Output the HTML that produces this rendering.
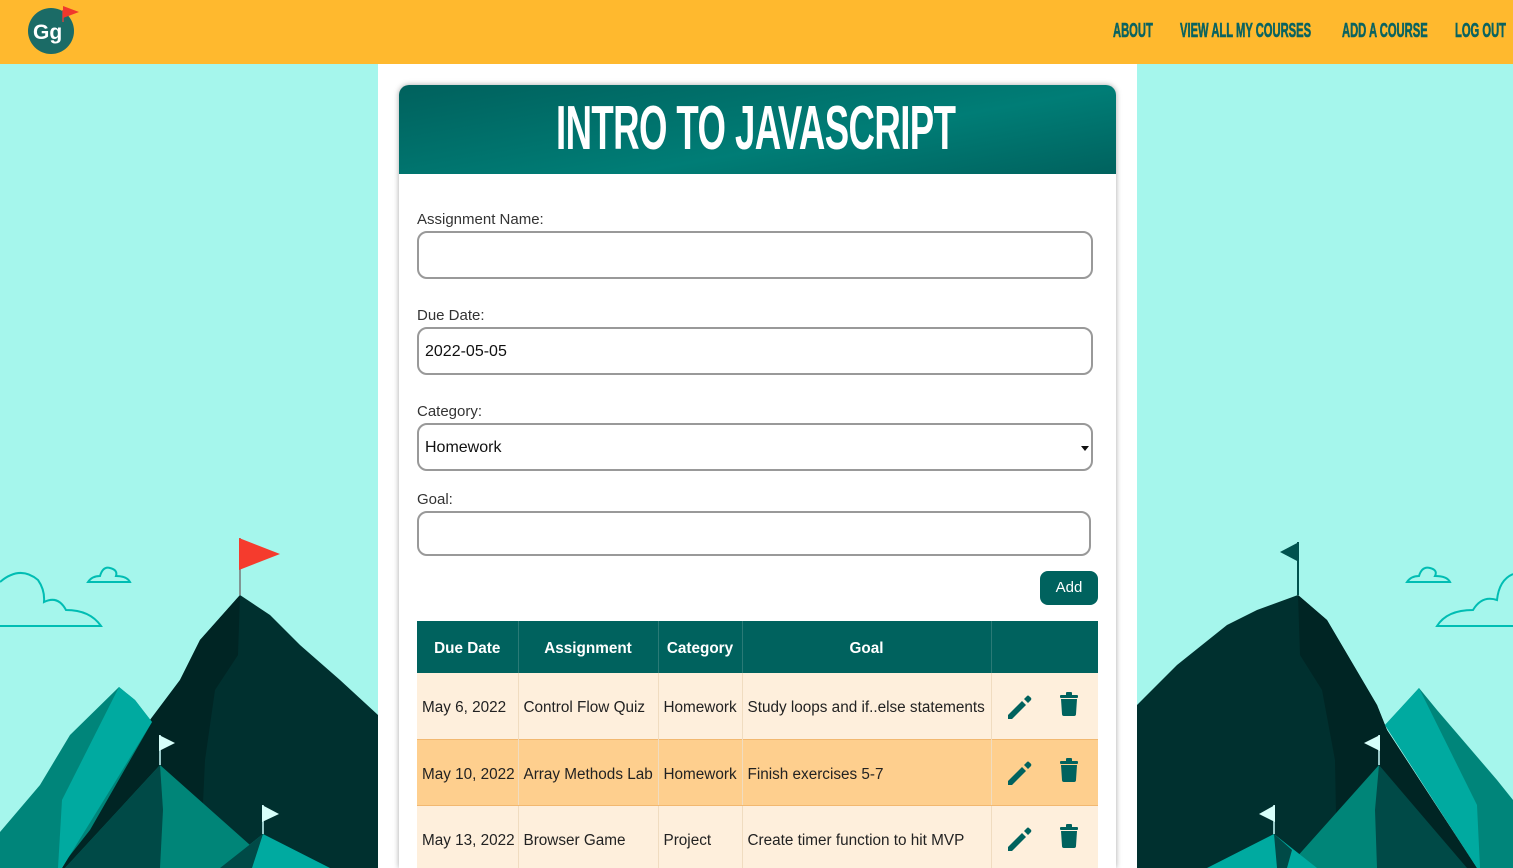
<!DOCTYPE html>
<html><head><style>
*{margin:0;padding:0;box-sizing:border-box}
html,body{width:1513px;height:868px;overflow:hidden}
body{background:#a5f6ec;font-family:"Liberation Sans",sans-serif;position:relative}
.top{position:absolute;left:0;top:0;width:1513px;height:64px;background:#ffb92e}
.nav{position:absolute;top:20px;font-family:"Liberation Sans Narrow","Liberation Sans",sans-serif;font-weight:bold;font-size:20px;color:#0a6360;transform:scaleX(.56);transform-origin:left;white-space:nowrap;-webkit-text-stroke:0.6px #0a6360}
.col{position:absolute;left:378px;top:64px;width:759px;height:804px;background:#fff}
.card{position:absolute;left:399px;top:85px;width:717px;height:783px;background:#fff;border-radius:10px 10px 0 0;box-shadow:0 0 6px rgba(0,0,0,.35)}
.ch{height:89px;border-radius:10px 10px 0 0;background:linear-gradient(170deg,#00615d,#007d76 60%,#00625e);position:relative}
.title{position:absolute;left:157px;top:8px;font-family:"Liberation Sans Narrow","Liberation Sans",sans-serif;font-weight:bold;font-size:62px;color:#fff;transform:scaleX(.59);transform-origin:left;white-space:nowrap;letter-spacing:-1px}
.lbl{position:absolute;left:417px;font-size:15px;color:#333}
.inp{position:absolute;left:417px;width:676px;height:48px;border:2px solid #999;border-radius:10px;font-size:16px;color:#111;padding:14px 0 0 6px}
.btn{position:absolute;left:1040px;top:571px;width:58px;height:34px;background:#00625e;color:#fff;border-radius:8px;font-size:15px;text-align:center;line-height:34px}
table{position:absolute;left:417px;top:621px;width:681px;border-collapse:collapse;font-size:15.3px}
th{background:#00625e;color:#fff;height:52px;font-weight:bold;border-left:1px solid #2a7a76;padding-top:3px}
td{height:66px;padding-left:5px;padding-top:5px;color:#222;border-left:1px solid #f0dcc0;white-space:nowrap}
tr.a td{background:#feefdc}
tr.b td{background:#fecf8e;border-top:1px solid #f2b870;border-bottom:1px solid #f2b870}
</style></head><body>
<div class="top">
<svg width="90" height="64" style="position:absolute;left:0;top:0"><circle cx="51" cy="31" r="23" fill="#1b6b66"/><line x1="63" y1="10" x2="63" y2="22" stroke="#c44" stroke-width="1.5"/><polygon points="63,6 79,12 63,18" fill="#f0382c"/><text x="33" y="39" font-family="Liberation Sans" font-weight="bold" font-size="21" fill="#fff">Gg</text></svg>
<div class="nav" style="left:1113px">ABOUT</div>
<div class="nav" style="left:1180px">VIEW ALL MY COURSES</div>
<div class="nav" style="left:1342px">ADD A COURSE</div>
<div class="nav" style="left:1455px">LOG OUT</div>
</div>
<svg width="378" height="338" style="position:absolute;left:0;top:530px" viewBox="0 0 378 338">
<g fill="none" stroke="#00bdb3" stroke-width="2"><path d="M0,52 Q20,35 38,50 Q45,60 44,72 Q58,65 66,80 Q90,80 101,96 L0,96"/><path d="M88,52 Q92,46 100,46 Q103,36 110,38 Q118,40 116,46 Q127,46 130,52 Z"/></g>
<polygon points="62,338 150,190 180,150 200,110 240,65 270,85 300,115 340,150 378,185 378,338" fill="#00302f"/>
<polygon points="62,338 150,190 180,150 200,110 240,65 238,125 215,160 205,230 200,338" fill="#002524"/>
<polygon points="0,302 40,255 70,205 119,157 135,170 152,192 90,300 60,338 0,338" fill="#00857a"/>
<polygon points="119,157 135,170 152,192 62,338 58,338 62,270" fill="#00aaa0"/>
<polygon points="65,338 160,235 250,315 230,338" fill="#008578"/>
<polygon points="65,338 160,235 163,280 160,338" fill="#004a47"/>
<polygon points="220,338 263,304 330,338" fill="#00aaa0"/>
<polygon points="220,338 263,304 252,338" fill="#004a47"/>
<line x1="240" y1="8" x2="240" y2="65" stroke="#777" stroke-width="1.5"/><polygon points="239,8 280,24 239,40" fill="#f53b2d"/>
<line x1="160" y1="205" x2="160" y2="235" stroke="#cff" stroke-width="1.5"/><polygon points="159,205 175,213 159,221" fill="#d7fffa"/>
<line x1="263" y1="275" x2="263" y2="304" stroke="#cff" stroke-width="1.5"/><polygon points="262,275 279,284 262,292" fill="#d7fffa"/>
</svg>
<svg width="376" height="338" style="position:absolute;left:1137px;top:530px" viewBox="0 0 376 338">
<g fill="none" stroke="#00bdb3" stroke-width="2"><path d="M376,44 Q362,50 360,70 Q345,65 336,80 Q310,80 300,96 L376,96"/><path d="M270,52 Q274,46 282,46 Q285,36 293,38 Q301,40 298,46 Q310,46 313,52 Z"/></g>
<polygon points="0,175 40,135 90,95 120,80 161,65 190,90 240,175 250,200 340,338 0,338" fill="#00302f"/>
<polygon points="161,65 190,90 240,175 250,200 340,338 200,338 198,230 185,160 163,125" fill="#002524"/>
<polygon points="248,195 282,158 300,180 330,215 360,250 376,270 376,338 340,338" fill="#00857a"/>
<polygon points="248,195 282,158 340,275 343,338 340,338" fill="#00aaa0"/>
<polygon points="150,338 242,235 330,338" fill="#004a47"/>
<polygon points="150,338 242,235 238,280 240,338" fill="#008578"/>
<polygon points="70,338 137,304 180,338" fill="#00aaa0"/>
<polygon points="137,304 155,320 150,338 140,338" fill="#004a47"/>
<line x1="161" y1="12" x2="161" y2="65" stroke="#00524e" stroke-width="2"/><polygon points="162,12 143,22 162,32" fill="#00524e"/>
<line x1="242" y1="205" x2="242" y2="235" stroke="#cff" stroke-width="1.5"/><polygon points="243,205 227,213 243,221" fill="#d7fffa"/>
<line x1="137" y1="275" x2="137" y2="304" stroke="#cff" stroke-width="1.5"/><polygon points="138,275 122,284 138,292" fill="#d7fffa"/>
</svg>
<div class="col"></div>
<div class="card"><div class="ch"><div class="title">INTRO TO JAVASCRIPT</div></div></div>
<div class="lbl" style="top:211px">Assignment Name:</div>
<div class="inp" style="top:231px"></div>
<div class="lbl" style="top:307px">Due Date:</div>
<div class="inp" style="top:327px">2022-05-05</div>
<div class="lbl" style="top:403px">Category:</div>
<div class="inp" style="top:423px">Homework<span style="position:absolute;right:2px;top:21px;border:4px solid transparent;border-top:5px solid #111"></span></div>
<div class="lbl" style="top:491px">Goal:</div>
<div class="inp" style="top:511px;height:45px;width:674px"></div>
<div class="btn">Add</div>
<table>
<tr><th style="width:101px;border-left:none">Due Date</th><th style="width:140px">Assignment</th><th style="width:84px">Category</th><th style="width:249px">Goal</th><th></th></tr>
<tr class="a"><td style="border-left:none">May 6, 2022</td><td>Control Flow Quiz</td><td>Homework</td><td>Study loops and if..else statements</td><td class="ic"></td></tr>
<tr class="b"><td style="border-left:none">May 10, 2022</td><td>Array Methods Lab</td><td>Homework</td><td>Finish exercises 5-7</td><td class="ic"></td></tr>
<tr class="a"><td style="border-left:none">May 13, 2022</td><td>Browser Game</td><td>Project</td><td>Create timer function to hit MVP</td><td class="ic"></td></tr>
</table>
<svg width="100" height="200" style="position:absolute;left:1000px;top:690px">
<g fill="#00625e">
<g transform="translate(8,3)"><path d="M0,22 L0,26 L4,26 L18,12 L14,8 Z M16,6 L20,10 L23,7 Q24,5 22,4 L21,3 Q20,2 19,3 Z"/></g>
<g transform="translate(60,2)"><rect x="0" y="3" width="18" height="3" rx="1"/><rect x="6" y="0" width="6" height="4" rx="1"/><path d="M1,7 L17,7 L16,22 Q16,24 14,24 L4,24 Q2,24 2,22 Z"/></g>
<g transform="translate(8,69)"><path d="M0,22 L0,26 L4,26 L18,12 L14,8 Z M16,6 L20,10 L23,7 Q24,5 22,4 L21,3 Q20,2 19,3 Z"/></g>
<g transform="translate(60,68)"><rect x="0" y="3" width="18" height="3" rx="1"/><rect x="6" y="0" width="6" height="4" rx="1"/><path d="M1,7 L17,7 L16,22 Q16,24 14,24 L4,24 Q2,24 2,22 Z"/></g>
<g transform="translate(8,135)"><path d="M0,22 L0,26 L4,26 L18,12 L14,8 Z M16,6 L20,10 L23,7 Q24,5 22,4 L21,3 Q20,2 19,3 Z"/></g>
<g transform="translate(60,134)"><rect x="0" y="3" width="18" height="3" rx="1"/><rect x="6" y="0" width="6" height="4" rx="1"/><path d="M1,7 L17,7 L16,22 Q16,24 14,24 L4,24 Q2,24 2,22 Z"/></g>
</g></svg>
</body></html>
